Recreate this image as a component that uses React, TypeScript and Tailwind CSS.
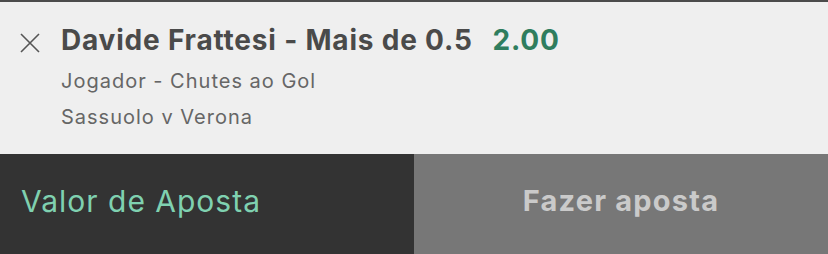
import React from 'react';

const CloseIcon: React.FC = () => (
  <svg width="20" height="20" viewBox="0 0 20 20" className="shrink-0">
    <path d="M1 1 L19 19 M19 1 L1 19" stroke="#555555" strokeWidth="1.6" fill="none" />
  </svg>
);

export default function App() {
  return (
    <div className="w-[828px] h-[254px] flex flex-col bg-[#efefef] font-['Inter',sans-serif] overflow-hidden">
      <div className="h-[2px] bg-[#4b4b4b]" />

      {/* Selection */}
      <div className="h-[152px] flex pl-[20px] pt-[20px]">
        <div className="pt-[11px]">
          <CloseIcon />
        </div>
        <div className="ml-[21px] flex flex-col">
          <div className="flex items-baseline text-[28px] leading-[36px] font-bold tracking-[0.8px]">
            <span className="text-[#4a4a4a]">Davide Frattesi - Mais de 0.5</span>
            <span className="ml-[20px] text-[#2f7d5e]">2.00</span>
          </div>
          <div className="mt-[5px] text-[20px] leading-[36px] tracking-[1px] text-[#666666]">
            <div>Jogador - Chutes ao Gol</div>
            <div>Sassuolo v Verona</div>
          </div>
        </div>
      </div>

      {/* Actions */}
      <div className="h-[100px] flex">
        <div className="w-1/2 bg-[#333333] flex items-center pl-[21px] pb-[6px]">
          <span className="text-[30px] tracking-[1px] text-[#7fd1b0]">Valor de Aposta</span>
        </div>
        <div className="w-1/2 bg-[#777777] flex items-center justify-center pb-[6px]">
          <span className="text-[29px] font-bold tracking-[1.2px] text-[#cacaca]">Fazer aposta</span>
        </div>
      </div>
    </div>
  );
}
